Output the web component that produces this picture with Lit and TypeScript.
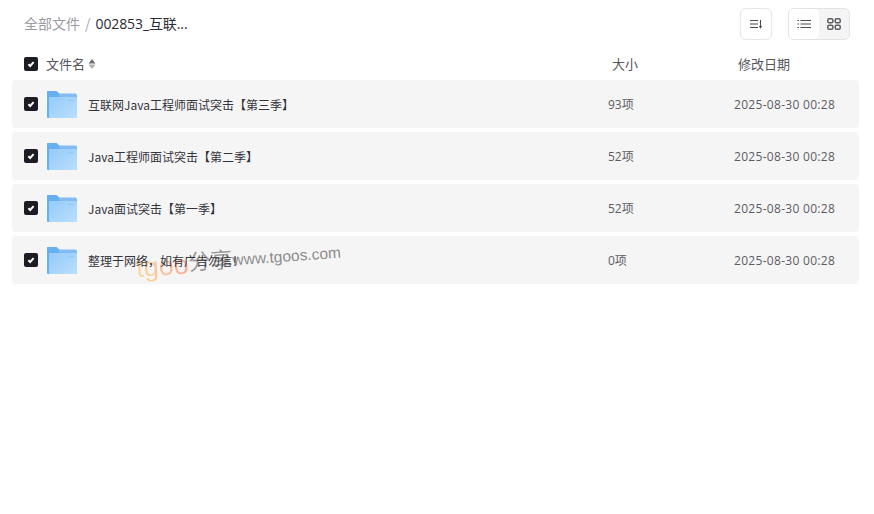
import { LitElement, html, css } from "lit";
import { customElement } from "lit/decorators.js";

const rows = [
  ["互联网Java工程师面试突击【第三季】", "93项"],
  ["Java工程师面试突击【第二季】", "52项"],
  ["Java面试突击【第一季】", "52项"],
  ["整理于网络，如有广告勿信！", "0项"],
];

const check = html`<span class="cb"><svg width="10" height="10" viewBox="0 0 10 10"><path d="M2.400 5.200 4.200 7 7.600 3.200" fill="none" stroke="#fff" stroke-width="2"/></svg></span>`;

const folder = html`<svg class="folder" width="30" height="27" viewBox="0 0 30 27">
  <defs>
    <linearGradient id="fg" x1="0" y1="0" x2="1" y2="1"><stop offset="0" stop-color="#93cbfa"/><stop offset="1" stop-color="#bbdffd"/></linearGradient>
  </defs>
  <path d="M0 1A1 1 0 0 1 1 0H9.500l2.500 2.500h16.500A1.500 1.500 0 0 1 30 4V8H0Z" fill="#80bdf4"/>
  <path d="M0 1A1 1 0 0 1 1 0H9.500L12 2.500 12.500 6H0Z" fill="#66b0f0"/>
  <path d="M0 2h3v25H1a1 1 0 0 1-1-1Z" fill="#66b0f0"/>
  <path d="M2 6h26.500A1.500 1.500 0 0 1 30 7.500V27H3a1 1 0 0 1-1-1Z" fill="url(#fg)"/>
  <rect x="21" y="8.500" width="6" height="2" fill="#82bef4" opacity=".45"/>
</svg>`;

@customElement("app-root")
export class AppRoot extends LitElement {
  static styles = css`
    :host {
      display: block;
      width: 874px;
      height: 514px;
      position: relative;
      overflow: hidden;
      background: #fff;
      font-family: "Noto Sans CJK SC", "Open Sans", sans-serif;
      font-size: 12px;
      color: #3c3c43;
    }
    .top {
      display: flex;
      align-items: center;
      height: 32px;
      padding: 8px 24px 0;
    }
    .crumb {
      display: flex;
      align-items: center;
      font-size: 14px;
      flex: 1;
      margin-top: -2px;
    }
    .crumb .root { color: #9a9a9f; }
    .crumb .sep { color: #a5a5aa; margin: 0 5px 0 5px; }
    .crumb .cur { color: #2b2b33; font-family: "Open Sans", "Noto Sans CJK SC", sans-serif; letter-spacing: -0.1px; }
    .btn {
      width: 32px;
      height: 32px;
      box-sizing: border-box;
      border: 1px solid #e6e6e8;
      border-radius: 6px;
      display: flex;
      align-items: center;
      justify-content: center;
      margin-right: 16px;
    }
    .toggle {
      width: 62px;
      height: 32px;
      border: 1px solid #e3e3e5;
      background: #f4f4f5;
      margin-right: 0;
      justify-content: flex-start;
    }
    .toggle span {
      width: 30px;
      height: 30px;
      display: flex;
      align-items: center;
      justify-content: center;
    }
    .toggle .on { background: #fff; border-radius: 5px; }
    .head {
      display: grid;
      grid-template-columns: 588px 126px 1fr;
      align-items: center;
      box-sizing: border-box;
      height: 40px;
      padding: 7px 0 0 24px;
      font-size: 13px;
      color: #55555c;
    }
    .first { display: flex; align-items: center; gap: 8px; }
    .namehead { display: flex; align-items: center; gap: 3px; }
    .cb {
      width: 14px;
      height: 14px;
      border-radius: 2px;
      background: #1c1c24;
      display: flex;
      align-items: center;
      justify-content: center;
    }
    .list {
      display: flex;
      flex-direction: column;
      gap: 4px;
      margin: 0 15px 0 12px;
    }
    .row {
      display: flex;
      align-items: center;
      height: 48px;
      background: #f5f5f5;
      border-radius: 4px;
      padding-left: 12px;
    }
    .folder { margin-left: 9px; flex: none; }
    .name { position: relative; z-index: 2; margin-left: 11px; flex: 1; color: #33333b; }
    .size { width: 126px; color: #5c5c63; font-family: "Open Sans", "Noto Sans CJK SC", sans-serif; }
    .date { width: 125px; color: #5c5c63; font-family: "Open Sans", sans-serif; letter-spacing: 0.3px; }
    .mark {
      position: absolute;
      z-index: 1;
      left: 137px;
      top: 246px;
      display: flex;
      align-items: baseline;
      white-space: nowrap;
      transform: rotate(-4deg);
      transform-origin: left bottom;
      pointer-events: none;
      font-family: "Liberation Sans", sans-serif;
    }
    .mark .t {
      position: relative;
      top: 5px;
      font-size: 27px;
      background: linear-gradient(90deg, #f9dc9e, #f8a898);
      -webkit-background-clip: text;
      background-clip: text;
      color: transparent;
    }
    .mark .f {
      position: relative;
      top: 2px;
      font-family: "Noto Sans CJK SC", sans-serif;
      font-size: 22px;
      color: #9a9a9a;
    }
    .mark .u { font-size: 15.500px; color: #8c8c8c; }
  `;

  render() {
    return html`
      <div class="top">
        <div class="crumb">
          <span class="root">全部文件</span><span class="sep">/</span><span class="cur">002853_互联...</span>
        </div>
        <div class="btn">
          <svg width="14" height="10" viewBox="0 0 14 10" fill="none" stroke="#4a4a50" stroke-width="1.100">
            <path d="M1 1.500h8M1 5h8M1 8.500h8M11.500 1v7"/><path d="M9.800 7 11.500 9.800 13.200 7Z" fill="#4a4a50" stroke="none"/>
          </svg>
        </div>
        <div class="btn toggle">
          <span class="on"><svg width="14" height="10" viewBox="0 0 14 10" fill="none" stroke="#4a4a50" stroke-width="1.100">
            <path d="M3.500 1.500H14M3.500 5H14M3.500 8.500H14M.5 1.500h1.500M.5 5h1.500M.5 8.500h1.500"/></svg></span>
          <span><svg width="14" height="12" viewBox="0 0 14 12" fill="none" stroke="#5c5c62" stroke-width="1.500">
            <rect x=".8" y=".8" width="5" height="4" rx="1.300"/><rect x="8.200" y=".8" width="5" height="4" rx="1.300"/>
            <rect x=".8" y="7.200" width="5" height="4" rx="1.300"/><rect x="8.200" y="7.200" width="5" height="4" rx="1.300"/></svg></span>
        </div>
      </div>
      <div class="head">
        <div class="first">${check}<span class="namehead">文件名
          <svg width="8" height="12" viewBox="0 0 8 12"><path d="M4 1 7.500 5.500H.5Z" fill="#6f6f74"/><path d="M4 11 7.500 6.500H.5Z" fill="#b0b0b4"/></svg></span></div>
        <div>大小</div>
        <div>修改日期</div>
      </div>
      <div class="list">
        ${rows.map(
          ([n, s]) => html`<div class="row">
            ${check}${folder}
            <div class="name">${n}</div>
            <div class="size">${s}</div>
            <div class="date">2025-08-30 00:28</div>
          </div>`
        )}
      </div>
      <div class="mark"><span class="t">tgoo</span><span class="f">分享</span><span class="u">www.tgoos.com</span></div>
    `;
  }
}
